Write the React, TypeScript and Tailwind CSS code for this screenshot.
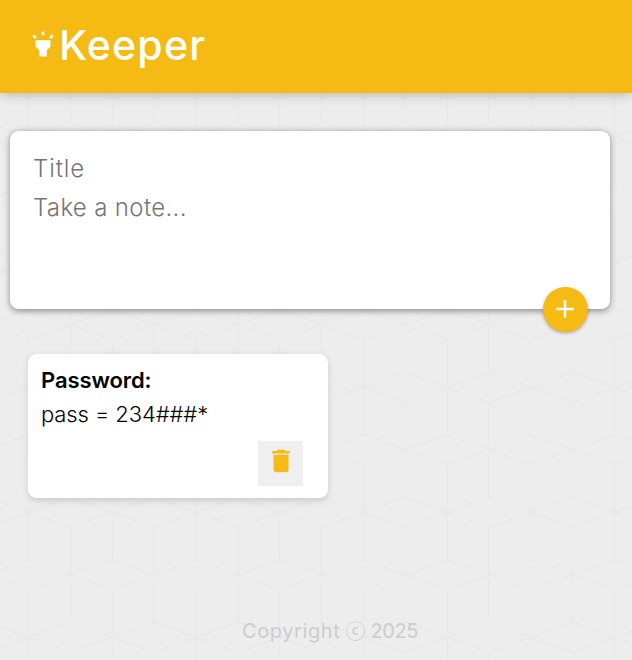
function Backdrop() {
  return (
    <svg className="absolute inset-0 -z-10 h-full w-full" aria-hidden="true">
      <defs>
        <pattern id="cubes" x="28.5" y="12.3" width="83.75" height="125" patternUnits="userSpaceOnUse">
          <g fill="none" stroke="#e8e8e8" strokeWidth="1.3">
            <path d="M0 0 41.875 15 83.75 0M0 125 41.875 110 83.75 125" />
            <path d="M0 47.5 41.875 62.5 0 77.5M83.75 47.5 41.875 62.5 83.75 77.5" />
            <path d="M41.875 15V110M0 0V47.5M0 77.5V125M83.75 0V47.5M83.75 77.5V125" />
          </g>
        </pattern>
      </defs>
      <rect width="100%" height="100%" fill="url(#cubes)" />
    </svg>
  );
}

function Icon({ d }: { d: string }) {
  return (
    <svg viewBox="0 0 24 24" className="size-[30px] shrink-0" fill="currentColor" aria-hidden="true">
      <path d={d} />
    </svg>
  );
}

const HIGHLIGHT =
  "m6 14 3 3v5h6v-5l3-3V9H6zm5-12h2v3h-2zM3.5 5.875 4.914 4.46l2.12 2.122L5.62 7.997zm13.46.71 2.123-2.12 1.414 1.414L18.375 8z";
const ADD = "M19 13h-6v6h-2v-6H5v-2h6V5h2v6h6z";
const TRASH =
  "M6 19c0 1.1.9 2 2 2h8c1.1 0 2-.9 2-2V7H6zM19 4h-3.5l-1-1h-5l-1 1H5v2h14z";

function Header() {
  return (
    <header className="flex h-[93px] items-start bg-[#f5ba13] pl-7 text-white shadow-[0_0_12.5px_rgba(0,0,0,0.3)]">
      <div className="pt-[29px]">
        <Icon d={HIGHLIGHT} />
      </div>
      <h1 className="pt-5 pl-px font-['Inter',sans-serif] text-[41px] leading-[50px] font-medium tracking-[1.2px]">
        Keeper
      </h1>
    </header>
  );
}

function CreateArea() {
  return (
    <form className="relative mt-[38px] ml-[10px] h-[178px] w-[600px] rounded-[8.75px] bg-white pt-[18px] pl-[23px] text-2xl leading-[39px] font-[350] text-[#757575] shadow-[0_1.25px_6.25px_rgb(138,137,137)]">
      <p className="tracking-[0.9px]">Title</p>
      <p className="tracking-[0.35px]">Take a note...</p>
      <button
        type="button"
        className="absolute right-[22px] -bottom-[23px] flex size-[45px] justify-center rounded-full bg-[#f5ba13] pt-[7px] pr-px text-white shadow-[0_1.25px_3.75px_rgba(0,0,0,0.3)]"
      >
        <Icon d={ADD} />
      </button>
    </form>
  );
}

function Note() {
  return (
    <article className="mt-[45px] ml-7 flex h-[144px] w-[300px] flex-col rounded-[8.75px] bg-white pt-[9px] pr-[25px] pb-3 pl-[13px] text-black shadow-[0_2.5px_6.25px_#ccc]">
      <h2 className="text-[22px] leading-[34px] font-semibold tracking-[-0.1px]">Password:</h2>
      <p className="text-[22px] leading-[34px] font-light tracking-[-0.1px]">pass = 234###*</p>
      <button
        type="button"
        className="mt-auto flex size-[45px] justify-center self-end bg-[#efefef] pt-[5px] text-[#f5ba13]"
      >
        <Icon d={TRASH} />
      </button>
    </article>
  );
}

export default function App() {
  return (
    <div className="relative isolate flex h-[660px] w-[632px] flex-col overflow-hidden bg-[#ededed] font-['Inter',sans-serif]">
      <Backdrop />
      <Header />
      <CreateArea />
      <Note />
      <footer className="mt-auto mb-4 flex items-center pl-[242px] text-[20px] leading-[26px] text-[#ccc]">
        <span className="tracking-[0.6px]">Copyright</span>
        <span className="ml-[5px] font-['Noto_Sans_CJK_SC',sans-serif]">ⓒ</span>
        <span className="ml-[5px] tracking-[-0.4px]">2025</span>
      </footer>
    </div>
  );
}
